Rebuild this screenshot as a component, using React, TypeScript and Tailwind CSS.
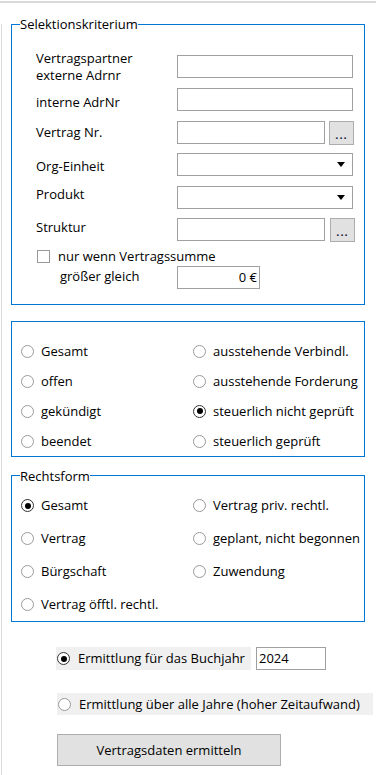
import React from "react";

function Radio({ checked = false }: { checked?: boolean }) {
  return (
    <span
      className={
        "w-[13px] h-[13px] rounded-full border bg-white flex items-center justify-center shrink-0 " +
        (checked ? "border-[#333333]" : "border-[#9a9a9a]")
      }
    >
      {checked && <span className="w-[6px] h-[6px] rounded-full bg-black" />}
    </span>
  );
}

function RadioItem({ label, checked = false }: { label: string; checked?: boolean }) {
  return (
    <div className="flex items-center gap-[7px] whitespace-nowrap">
      <Radio checked={checked} />
      <span>{label}</span>
    </div>
  );
}

function Arrow() {
  return (
    <svg width="8" height="5" viewBox="0 0 8 5" className="shrink-0">
      <path d="M0 0 H8 L4 5 Z" fill="#000" />
    </svg>
  );
}

function DotsButton() {
  return (
    <div className="w-[25px] h-[24px] bg-[#e1e1e1] border border-[#adadad] flex items-end justify-center pb-[4px] shrink-0">
      <span className="text-[11px] leading-[10px] font-bold tracking-[1px] text-[#202040]">...</span>
    </div>
  );
}

export default function App() {
  return (
    <div className="w-[376px] h-[775px] bg-white overflow-hidden text-[13px] leading-[17px] text-black font-['Segoe_UI','Open_Sans','Noto_Sans',sans-serif]">
      <div className="h-[1px]" />
      <div className="h-[2px] bg-[#dadada]" />
      <div className="mt-[1px] ml-[1px] h-[771px] border-l border-[#dadada]">
        {/* Group 1 */}
        <div className="relative ml-[9px] mt-[21px] w-[354px] h-[281px] border border-[#0078d7] pl-[24px]">
          <span className="absolute left-[8px] top-[-9px] bg-white">Selektionskriterium</span>

          {/* Row A */}
          <div className="flex mt-[24px]">
            <div className="w-[141px] translate-y-[1px]">
              <div>Vertragspartner</div>
              <div>externe Adrnr</div>
            </div>
            <div className="mt-[6px] w-[176px] h-[23px] border border-[#a0a0a0] bg-white" />
          </div>

          {/* Row B */}
          <div className="flex mt-[5px]">
            <div className="w-[141px] mt-[5px] translate-y-[1px]">interne AdrNr</div>
            <div className="w-[176px] h-[23px] border border-[#a0a0a0] bg-white" />
          </div>

          {/* Row C */}
          <div className="flex mt-[10px]">
            <div className="w-[141px] mt-[2px] translate-y-[1px]">Vertrag Nr.</div>
            <div className="w-[148px] h-[23px] border border-[#a0a0a0] bg-white" />
            <div className="ml-[4px]">
              <DotsButton />
            </div>
          </div>

          {/* Row D */}
          <div className="flex mt-[8px]">
            <div className="w-[141px] mt-[4px] translate-y-[1px]">Org-Einheit</div>
            <div className="w-[176px] h-[23px] border border-[#a0a0a0] bg-white flex items-center justify-end pr-[7px]">
              <Arrow />
            </div>
          </div>

          {/* Row E */}
          <div className="flex mt-[8px]">
            <div className="w-[141px] translate-y-[2px]">Produkt</div>
            <div className="mt-[2px] w-[176px] h-[23px] border border-[#a0a0a0] bg-white flex items-center justify-end pr-[7px]">
              <Arrow />
            </div>
          </div>

          {/* Row F */}
          <div className="flex mt-[8px]">
            <div className="w-[141px] translate-y-[2px]">Struktur</div>
            <div className="mt-[1px] w-[148px] h-[23px] border border-[#a0a0a0] bg-white" />
            <div className="ml-[5px] mt-[1px]">
              <DotsButton />
            </div>
          </div>

          {/* Row G */}
          <div className="flex mt-[4px] ml-[1px] items-start">
            <div className="mt-[4px] w-[13px] h-[13px] border border-[#999999] bg-white shrink-0" />
            <div className="ml-[8px] translate-y-[2px]">nur wenn Vertragssumme</div>
          </div>

          {/* Row H */}
          <div className="flex mt-[3px]">
            <div className="w-[141px] pl-[24px] translate-y-[2px]">größer gleich</div>
            <div className="w-[83px] h-[23px] border border-[#a0a0a0] bg-white flex items-center justify-end pr-[2px]">
              0 €
            </div>
          </div>
        </div>

        {/* Group 2 */}
        <div className="ml-[9px] mt-[16px] w-[354px] h-[136px] border border-[#0078d7] pl-[9px] pt-[14px]">
          <div className="grid grid-cols-[172px_1fr] auto-rows-[30px] items-center">
            <RadioItem label="Gesamt" />
            <RadioItem label="ausstehende Verbindl." />
            <RadioItem label="offen" />
            <RadioItem label="ausstehende Forderung" />
            <RadioItem label="gekündigt" />
            <RadioItem label="steuerlich nicht geprüft" checked />
            <RadioItem label="beendet" />
            <RadioItem label="steuerlich geprüft" />
          </div>
        </div>

        {/* Group 3 */}
        <div className="relative ml-[9px] mt-[18px] w-[354px] h-[147px] border border-[#0078d7] pl-[9px] pt-[13px]">
          <span className="absolute left-[8px] top-[-8px] bg-white">Rechtsform</span>
          <div className="grid grid-cols-[172px_1fr] auto-rows-[33px] items-center">
            <RadioItem label="Gesamt" checked />
            <RadioItem label="Vertrag priv. rechtl." />
            <RadioItem label="Vertrag" />
            <RadioItem label="geplant, nicht begonnen" />
            <RadioItem label="Bürgschaft" />
            <RadioItem label="Zuwendung" />
            <RadioItem label="Vertrag öfftl. rechtl." />
          </div>
        </div>

        {/* Bottom */}
        <div className="ml-[54px] mt-[25px] flex items-center">
          <div className="w-[195px] h-[23px] bg-[#f0f0f0] flex items-center pl-[1px] gap-[8px] whitespace-nowrap">
            <Radio checked />
            <span>Ermittlung für das Buchjahr</span>
          </div>
          <div className="ml-[5px] w-[70px] h-[23px] border border-[#a0a0a0] bg-white flex items-center pl-[2px]">
            2024
          </div>
        </div>

        <div className="ml-[55px] mt-[23px] w-[316px] h-[22px] bg-[#f0f0f0] flex items-center pl-[1px] gap-[8px] whitespace-nowrap">
          <Radio />
          <span>Ermittlung über alle Jahre (hoher Zeitaufwand)</span>
        </div>

        <div className="ml-[55px] mt-[19px] w-[224px] h-[32px] bg-[#e1e1e1] border border-[#adadad] flex items-center justify-center">
          Vertragsdaten ermitteln
        </div>
      </div>
    </div>
  );
}
